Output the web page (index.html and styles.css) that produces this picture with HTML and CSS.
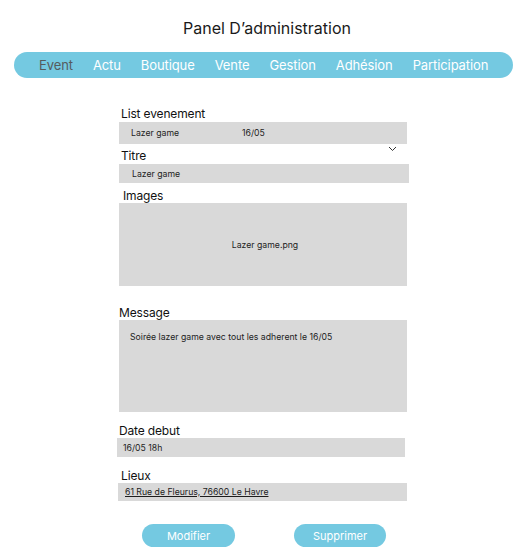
FILE: index.html
```html
<!DOCTYPE html>
<html lang="fr">
<head>
<meta charset="utf-8">
<title>Panel D’administration</title>
<link rel="stylesheet" href="styles.css">
</head>
<body>
<h1 class="title">Panel D’administration</h1>
<nav class="nav">
  <a class="nav-item active">Event</a>
  <a class="nav-item">Actu</a>
  <a class="nav-item">Boutique</a>
  <a class="nav-item">Vente</a>
  <a class="nav-item">Gestion</a>
  <a class="nav-item">Adhésion</a>
  <a class="nav-item">Participation</a>
</nav>
<main class="form">
  <section class="field f-list">
    <div class="label">List evenement</div>
    <div class="box select"><span class="sel-name">Lazer game</span><span>16/05</span></div>
    <svg class="chevron" width="9" height="6" viewBox="0 0 9 6"><path d="M1 1 L4.5 4.5 L8 1" fill="none" stroke="#333" stroke-width="1"/></svg>
  </section>
  <section class="field f-titre">
    <div class="label">Titre</div>
    <div class="box input">Lazer game</div>
  </section>
  <section class="field f-images">
    <div class="label">Images</div>
    <div class="box image">Lazer game.png</div>
  </section>
  <section class="field f-message">
    <div class="label">Message</div>
    <div class="box message">Soirée lazer game avec tout les adherent le 16/05</div>
  </section>
  <section class="field f-date">
    <div class="label">Date debut</div>
    <div class="box input">16/05 18h</div>
  </section>
  <section class="field f-lieux">
    <div class="label">Lieux</div>
    <div class="box input"><span class="link">61 Rue de Fleurus, 76600 Le Havre</span></div>
  </section>
</main>
<div class="actions">
  <button class="btn btn-mod">Modifier</button>
  <button class="btn btn-sup">Supprimer</button>
</div>
</body>
</html>
```
FILE: styles.css
```css
* { box-sizing: border-box; }
html, body { margin: 0; padding: 0; background: #fff; }
body { font-family: Inter, "Noto Sans", sans-serif; color: #1a1a1a; width: 518px; }

.title {
  margin: 0;
  padding-top: 17px;
  padding-left: 16px;
  height: 52px;
  font-size: 16px;
  font-weight: 400;
  line-height: 22px;
  text-align: center;
}

.nav {
  margin-left: 14px;
  width: 499px;
  height: 26px;
  border-radius: 13px;
  background: #74c9e1;
  display: flex;
  align-items: center;
  gap: 20px;
  padding-left: 25px;
  padding-bottom: 1px;
}
.nav-item {
  color: #fff;
  font-size: 13px;
  letter-spacing: -0.1px;
  line-height: 24px;
}
.nav-item.active { color: #555b5e; }

.form {
  margin-left: 119px;
  width: 292px;
  display: flex;
  flex-direction: column;
}
.field { position: relative; display: flex; flex-direction: column; }
.label {
  font-size: 12px;
  letter-spacing: -0.15px;
  line-height: 14px;
  height: 14px;
  padding-left: 2px;
  color: #111;
}
.box {
  background: #d9d9d9;
  width: 288px;
  font-size: 8.7px;
  color: #1d1d1d;
  display: flex;
  align-items: center;
}

.f-list { margin-top: 29px; }
.f-list .box { margin-top: 1px; height: 22px; padding-left: 12px; }
.sel-name { width: 111px; }
.chevron { position: absolute; right: 14px; top: 39px; }

.f-titre { margin-top: 5px; }
.f-titre .box { margin-top: 1px; height: 19px; width: 290px; padding-left: 13px; }

.f-images { margin-top: 6px; }
.f-images .label { padding-left: 4px; }
.f-images .box { height: 83px; justify-content: center; padding-left: 4px; }

.f-message { margin-top: 20px; }
.f-message .label { padding-left: 0; }
.f-message .box { height: 92px; align-items: flex-start; padding: 12px 11px; }

.f-date { margin-top: 12px; }
.f-date .label { padding-left: 0; }
.f-date .box { height: 19px; margin-left: -2px; padding-left: 6px; }

.f-lieux { margin-top: 12px; }
.f-lieux .box { height: 18px; margin-left: -1px; width: 289px; padding-left: 7px; }
.link { text-decoration: underline; }

.actions {
  margin-top: 23px;
  margin-left: 142px;
  display: flex;
  gap: 59px;
}
.btn {
  border: 0;
  background: #74c9e1;
  color: #fff;
  font-family: Inter, "Noto Sans", sans-serif;
  font-size: 11px;
  height: 23px;
  border-radius: 12px;
  padding: 0;
}
.btn-mod { width: 93px; }
.btn-sup { width: 92px; }
```
